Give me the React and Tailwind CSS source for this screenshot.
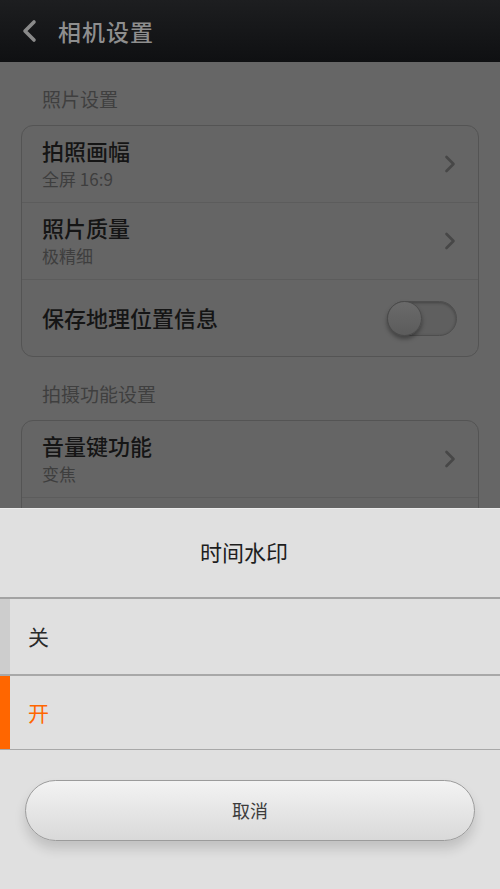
import React from "react";

const font = { fontFamily: '"Noto Sans CJK SC", "Noto Sans", sans-serif' };

function Chevron() {
  return (
    <svg width="12" height="20" viewBox="0 0 12 20" className="shrink-0">
      <path d="M2.5 3 L9.5 10 L2.5 17" fill="none" stroke="#474747" strokeWidth="2.6" strokeLinecap="round" strokeLinejoin="round" />
    </svg>
  );
}

function Row({ title, sub, last }) {
  return (
    <div className={`flex items-center h-[77px] pl-[20px] pr-[22px] ${last ? "" : "border-b border-[#5c5c5c]"}`}>
      <div className="flex-1 flex flex-col pb-[4px]">
        <div className="text-[22px] leading-[32px] text-[#151515] font-medium">{title}</div>
        {sub && <div className="text-[17px] leading-[25px] text-[#3e3e3e]">{sub}</div>}
      </div>
      <Chevron />
    </div>
  );
}

export default function App() {
  return (
    <div className="w-[500px] h-[889px] flex flex-col overflow-hidden bg-[#666666]" style={font}>
      <div className="h-[62px] shrink-0 flex items-center bg-gradient-to-b from-[#1d1e20] to-[#0f1012] pl-[20px]">
        <svg width="20" height="24" viewBox="0 0 20 24">
          <path d="M14 3 L5 12 L14 21" fill="none" stroke="#8a8a8a" strokeWidth="3.6" strokeLinecap="round" strokeLinejoin="round" />
        </svg>
        <div className="ml-[18px] text-[23px] font-medium text-[#8e8e8e] tracking-[1px]">相机设置</div>
      </div>
      <div className="h-[446px] shrink-0 overflow-hidden px-[21px]">
        <div className="pt-[24px] pl-[21px] h-[63px] text-[19px] leading-[26px] text-[#3f3f3f]">照片设置</div>
        <div className="rounded-[12px] border border-[#545454] bg-[#656565]">
          <Row title="拍照画幅" sub="全屏 16:9" />
          <Row title="照片质量" sub="极精细" />
          <div className="flex items-center h-[76px] pl-[20px] pr-[22px]">
            <div className="flex-1 text-[22px] text-[#151515] font-medium pb-[1px]">保存地理位置信息</div>
            <div className="relative w-[70px] h-[35px] rounded-full border border-[#4e4e4e] bg-[#5f5f5f] shadow-[inset_0_1px_3px_rgba(0,0,0,0.3)] mr-[-1px]">
              <div className="absolute left-[-1px] top-[-1px] w-[35px] h-[35px] rounded-full bg-gradient-to-b from-[#6a6a6a] to-[#5c5c5c] border border-[#4a4a4a] shadow-[0_3px_4px_rgba(0,0,0,0.35)]" />
            </div>
          </div>
        </div>
        <div className="pt-[24px] pl-[21px] h-[63px] text-[19px] leading-[26px] text-[#3f3f3f]">拍摄功能设置</div>
        <div className="rounded-t-[12px] border border-[#545454] bg-[#656565] h-[200px]">
          <Row title="音量键功能" sub="变焦" />
        </div>
      </div>
      <div className="flex-1 bg-[#e0e0e0] flex flex-col border-t border-[#ececec]">
        <div className="h-[88px] flex items-center justify-center pr-[12px] pb-[3px] text-[22px] text-[#1e1e1e]">时间水印</div>
        <div className="h-[2px] bg-[#a3a3a3]" />
        <div className="h-[75px] flex items-stretch">
          <div className="w-[10px] bg-[#cdcdcd]" />
          <div className="flex-1 flex items-center pl-[18px] text-[21px] text-[#2a2a2a]">关</div>
        </div>
        <div className="h-[2px] bg-[#a8a8a8]" />
        <div className="h-[73px] flex items-stretch">
          <div className="w-[10px] bg-[#ff6600]" />
          <div className="flex-1 flex items-center pl-[18px] text-[21px] text-[#ff6600]">开</div>
        </div>
        <div className="h-[1px] bg-[#a8a8a8]" />
        <div className="px-[25px] pt-[30px]">
          <div className="h-[61px] rounded-full border border-[#9b9b9b] bg-gradient-to-b from-[#f3f3f3] to-[#d9d9d9] shadow-[0_8px_12px_rgba(0,0,0,0.14)] flex items-center justify-center pb-[1px] text-[18px] text-[#3c3c3c]">
            取消
          </div>
        </div>
      </div>
    </div>
  );
}
